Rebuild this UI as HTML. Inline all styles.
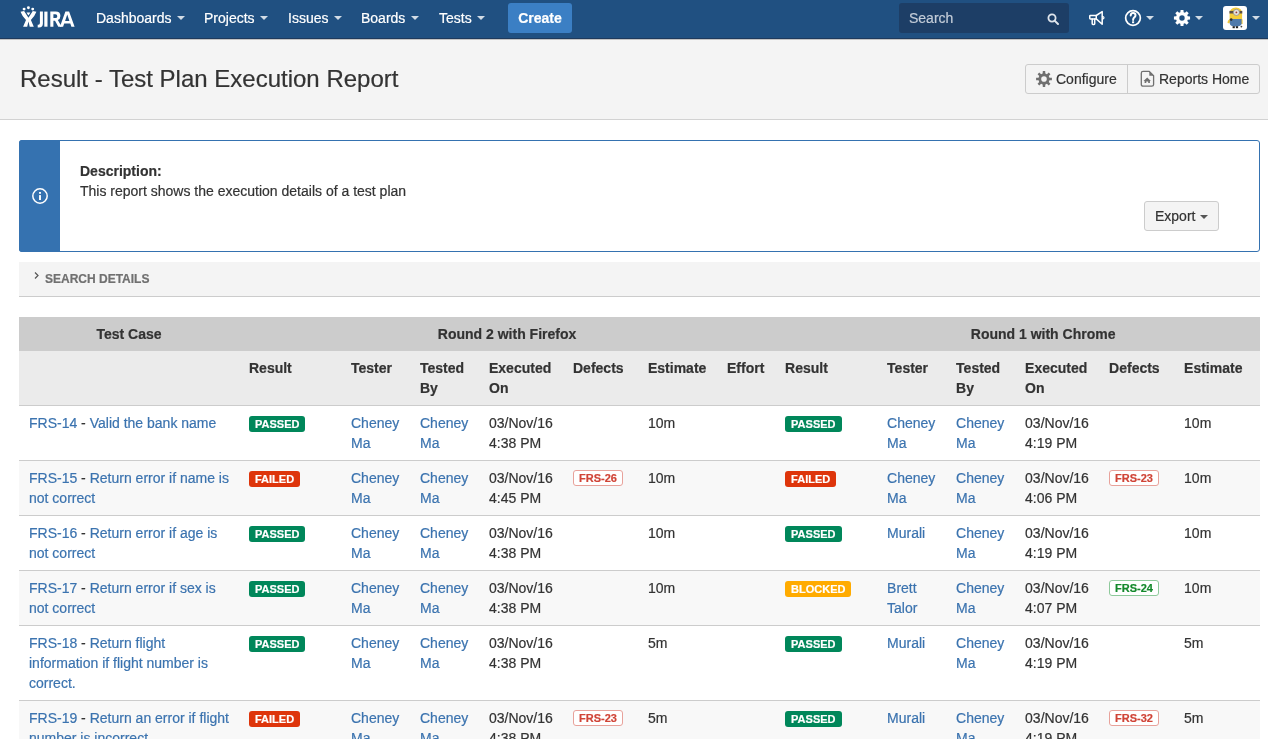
<!DOCTYPE html>
<html><head><meta charset="utf-8">
<style>
*{box-sizing:border-box;}
html,body{margin:0;padding:0;}
body{width:1268px;height:739px;overflow:hidden;position:relative;-webkit-font-smoothing:antialiased;background:#fff;font-family:"Liberation Sans",sans-serif;font-size:14px;color:#333;-webkit-text-stroke:0.2px currentColor;}
.abs{position:absolute;}
#hdr{will-change:transform;position:absolute;left:0;top:0;width:1268px;height:39px;background:#205081;border-bottom:1px solid #1f3a5c;box-shadow:0 1px 0 rgba(0,0,0,0.2);z-index:2;}
.nav{position:absolute;top:8px;height:20px;line-height:20px;color:#fff;font-size:14px;white-space:nowrap;}
.caret{position:absolute;width:0;height:0;border-left:4px solid transparent;border-right:4px solid transparent;border-top:4px solid rgba(255,255,255,.8);}
#create{position:absolute;left:508px;top:3px;width:64px;height:30px;background:#3b7fc4;border-radius:3px;color:#fff;font-weight:bold;text-align:center;line-height:30px;}
#search{position:absolute;left:899px;top:3px;width:170px;height:30px;background:#1d3e66;border-radius:3px;}
#search span{position:absolute;left:10px;top:5px;line-height:20px;color:#c3ccd8;}
#phead{will-change:transform;position:absolute;left:0;top:39px;width:1268px;height:81px;background:#f4f4f4;border-bottom:1px solid #d2d2d2;}
#title{position:absolute;left:20px;top:24px;font-size:24px;line-height:32px;color:#333;white-space:nowrap;}
#btns{position:absolute;left:1025px;top:25px;width:235px;height:30px;border:1px solid #ccc;border-radius:3px;background:#f4f4f4;}
#btns .div{position:absolute;left:101px;top:0;width:1px;height:28px;background:#ccc;}
#btns .t{position:absolute;top:4px;line-height:20px;color:#333;white-space:nowrap;}
#msg{will-change:transform;position:absolute;left:19px;top:140px;width:1241px;height:112px;border:1px solid #3572b0;border-radius:3px;background:#fff;}
#msg .strip{position:absolute;left:-1px;top:-1px;width:41px;height:112px;background:#3572b0;border-radius:3px 0 0 3px;}
#export{position:absolute;left:1124px;top:60px;width:75px;height:30px;border:1px solid #ccc;border-radius:3px;background:#f4f4f4;}
#sd{will-change:transform;position:absolute;left:19px;top:262px;width:1241px;height:35px;background:#f4f4f4;border-bottom:1px solid #ccc;}
#sd span{position:absolute;left:26px;top:10px;line-height:14px;font-size:12px;font-weight:bold;color:#707070;}
#tw{will-change:transform;position:absolute;left:19px;top:317px;width:1241px;height:430px;overflow:hidden;}
table{border-collapse:collapse;table-layout:fixed;width:1292px;}
td,th{padding:7px 10px;line-height:20px;vertical-align:top;text-align:left;font-size:14px;}
th{font-weight:bold;color:#333;}
tr.h1 th{background:#ccc;text-align:center;}
tr.h2 th{background:#ebebeb;border-bottom:1px solid #ccc;}
tbody tr td{border-bottom:1px solid #ccc;}
tbody tr.alt td{background:#f8f8f8;}
a{color:#3b73af;text-decoration:none;}
.loz{display:inline-block;height:16px;line-height:16px;padding:0 6px;border-radius:3px;font-size:11px;font-weight:bold;color:#fff;vertical-align:top;margin-top:3px;}
.pass{background:#00875a;}
.fail{background:#de350b;}
.block{background:#ffab00;}
.dr{display:inline-block;height:16px;line-height:14px;padding:0 5px;border-radius:3px;font-size:11px;font-weight:bold;border:1px solid #e8a29b;color:#d04437;background:#fff;vertical-align:top;margin-top:2px;}
.dg{display:inline-block;height:16px;line-height:14px;padding:0 5px;border-radius:3px;font-size:11px;font-weight:bold;border:1px solid #8ec99b;color:#14892c;background:#fff;vertical-align:top;margin-top:2px;}
</style></head><body>
<div id="hdr">
  <svg class="abs" style="left:0;top:0" width="80" height="38" viewBox="0 0 80 38">
    <g fill="#fff">
      <circle cx="24.1" cy="9.1" r="1.45"/><circle cx="28.4" cy="7.8" r="1.45"/><circle cx="32.7" cy="9.1" r="1.45"/>
      <polygon points="26.5,12.6 30.4,12.6 28.45,15.5"/>
      <path d="M20.5 11.8 L24.1 11.1 L28.45 17.7 L32.8 11.1 L36.4 11.8 Q34.5 16.8 30.9 20 L33.8 26.7 L29.7 26.7 L28.45 21.4 L27.2 26.7 L23.1 26.7 L26 20 Q22.4 16.8 20.5 11.8Z"/>
      <path d="M39.9 11.6 H42.9 V23.4 Q42.9 27.4 38.9 27.4 H37.7 V24.7 H38.5 Q39.9 24.7 39.9 23.1Z"/>
      <rect x="44.3" y="11.6" width="3.2" height="15.1"/>
      <path fill-rule="evenodd" d="M50.3 11.6 H55.6 Q60.4 11.6 60.4 15.9 Q60.4 19 57.8 20.1 L61.7 26.7 H58.3 L55 20.7 H53.4 V26.7 H50.3Z M53.4 14.3 V18.1 H55.3 Q57.3 18.1 57.3 16.2 Q57.3 14.3 55.3 14.3Z"/>
      <path fill-rule="evenodd" d="M65.4 11.6 H69.1 L74.6 26.7 H71.4 L70.3 23.5 H64.2 L63.1 26.7 H59.9Z M65.1 20.9 H69.4 L67.25 14.6Z"/>
    </g>
  </svg>
  <div class="nav" style="left:96px">Dashboards</div><div class="caret" style="left:177px;top:16px"></div>
  <div class="nav" style="left:204px">Projects</div><div class="caret" style="left:260px;top:16px"></div>
  <div class="nav" style="left:288px">Issues</div><div class="caret" style="left:334px;top:16px"></div>
  <div class="nav" style="left:361px">Boards</div><div class="caret" style="left:411px;top:16px"></div>
  <div class="nav" style="left:439px">Tests</div><div class="caret" style="left:477px;top:16px"></div>
  <div id="create">Create</div>
  <div id="search"><span>Search</span>
    <svg class="abs" style="left:148px;top:10px" width="13" height="13" viewBox="0 0 13 13"><circle cx="5" cy="5" r="3.6" stroke="#dfe5ec" stroke-width="1.8" fill="none"/><path d="M7.6 7.6 L11 11" stroke="#dfe5ec" stroke-width="2" stroke-linecap="round"/></svg>
  </div>
  <svg class="abs" style="left:1084px;top:6px" width="26" height="24" viewBox="0 0 26 24">
    <g stroke="#fff" stroke-width="1.5" fill="none" stroke-linejoin="round" stroke-linecap="round">
      <rect x="5.75" y="9.5" width="6.5" height="3.4" rx="0.6"/>
      <path d="M12.25 9.5 L18.2 5.6 L18.2 18.2 L12.25 12.9"/>
      <path d="M18.4 10.3 Q20 10.5 20 11.7 Q20 12.9 18.4 13.1" stroke-width="1.2"/>
      <path d="M8.2 12.9 L8.2 17.8 Q8.2 18.5 8.9 18.5 L10 18.5 Q10.7 18.5 10.7 17.8 L10.7 12.9"/>
    </g>
  </svg>
  <svg class="abs" style="left:1122px;top:6px" width="24" height="24" viewBox="0 0 24 24">
    <circle cx="11" cy="12" r="7.35" stroke="#fff" stroke-width="1.7" fill="none"/>
    <path d="M8.7 9.5 Q8.8 7.1 11.1 7.1 Q13.5 7.1 13.5 9.3 Q13.5 10.6 12.3 11.4 Q11.1 12.2 11.1 13.9" stroke="#fff" stroke-width="2" fill="none" stroke-linecap="round"/>
    <rect x="10.05" y="15.3" width="2.1" height="1.9" fill="#fff"/>
  </svg>
  <div class="caret" style="left:1146px;top:16px"></div>
  <svg class="abs" style="left:1173px;top:9px" width="18" height="18" viewBox="0 0 18 18">
    <path fill="#fff" fill-rule="evenodd" d="M7.37 3.23 L7.56 0.93 L10.44 0.93 L10.63 3.23 L11.93 3.77 L13.69 2.27 L15.73 4.31 L14.23 6.07 L14.77 7.37 L17.07 7.56 L17.07 10.44 L14.77 10.63 L14.23 11.93 L15.73 13.69 L13.69 15.73 L11.93 14.23 L10.63 14.77 L10.44 17.07 L7.56 17.07 L7.37 14.77 L6.07 14.23 L4.31 15.73 L2.27 13.69 L3.77 11.93 L3.23 10.63 L0.93 10.44 L0.93 7.56 L3.23 7.37 L3.77 6.07 L2.27 4.31 L4.31 2.27 L6.07 3.77Z M6.30 9.00 a2.70 2.70 0 1 0 5.40 0 a2.70 2.70 0 1 0 -5.40 0Z"/>
  </svg>
  <div class="caret" style="left:1195px;top:16px"></div>
  <div class="abs" style="left:1223px;top:6px;width:24px;height:24px;background:#fff;border-radius:3px;overflow:hidden">
    <svg width="24" height="24" viewBox="0 0 24 24">
      <path d="M6.6 8 Q6.6 1.5 12.85 1.5 Q19.1 1.5 19.1 8 L19.1 14 L6.6 14Z" fill="#f4cd3a"/>
      <path d="M4.3 16.5 Q5 13.5 7 13 L8.5 14.5 L6 17.5Z" fill="#f2c83a"/>
      <path d="M18 13 L19.6 13.5 L19.6 18 L18 18Z" fill="#f2c83a"/>
      <path d="M6.8 13 L18.6 13 L18.6 17.5 Q18.6 20.5 12.7 20.5 Q6.8 20.5 6.8 17.5Z" fill="#4f7aab"/>
      <rect x="6.4" y="4.9" width="12.9" height="2.6" fill="#5b5045"/>
      <circle cx="13.4" cy="6.4" r="3.1" fill="#e4e2de" stroke="#8a8580" stroke-width="0.7"/>
      <circle cx="13.4" cy="6.4" r="0.9" fill="#9c3a2e"/>
      <circle cx="8.2" cy="13.6" r="1.3" fill="#2e2e2e"/>
      <rect x="9.6" y="20.2" width="2.2" height="2" fill="#222"/><rect x="12.9" y="20.2" width="2.2" height="2" fill="#222"/>
      <circle cx="18.4" cy="20.6" r="0.9" fill="#444"/>
    </svg>
  </div>
  <div class="caret" style="left:1252px;top:16px"></div>
</div>

<div id="phead">
  <div id="title">Result - Test Plan Execution Report</div>
  <div id="btns">
    <svg class="abs" style="left:10px;top:6px" width="16" height="16" viewBox="0 0 16 16">
      <path fill="#707070" fill-rule="evenodd" d="M6.65 2.57 L6.81 0.09 L9.19 0.09 L9.35 2.57 L10.89 3.20 L12.75 1.56 L14.44 3.25 L12.80 5.11 L13.43 6.65 L15.91 6.81 L15.91 9.19 L13.43 9.35 L12.80 10.89 L14.44 12.75 L12.75 14.44 L10.89 12.80 L9.35 13.43 L9.19 15.91 L6.81 15.91 L6.65 13.43 L5.11 12.80 L3.25 14.44 L1.56 12.75 L3.20 10.89 L2.57 9.35 L0.09 9.19 L0.09 6.81 L2.57 6.65 L3.20 5.11 L1.56 3.25 L3.25 1.56 L5.11 3.20Z M5.20 8.00 a2.80 2.80 0 1 0 5.60 0 a2.80 2.80 0 1 0 -5.60 0Z"/>
    </svg>
    <span class="t" style="left:30px">Configure</span>
    <div class="div"></div>
    <svg class="abs" style="left:114px;top:5px" width="16" height="18" viewBox="0 0 16 18">
      <path d="M1.3 3.2 Q1.3 1.4 3.1 1.4 H9.3 L13.6 5.7 V14.4 Q13.6 16.2 11.8 16.2 H3.1 Q1.3 16.2 1.3 14.4Z" stroke="#707070" stroke-width="1.3" fill="none" stroke-linejoin="round"/>
      <path d="M9.3 1.4 V5.7 H13.6Z" fill="#707070"/>
      <path d="M7.2 7.6 L10.9 11 H9.9 V13 H8.2 V11.6 H6.3 V13 H4.6 V11 H3.5Z" fill="#707070"/>
    </svg>
    <span class="t" style="left:133px">Reports Home</span>
  </div>
</div>

<div id="msg">
  <div class="strip">
    <svg class="abs" style="left:12px;top:47px" width="18" height="18" viewBox="0 0 18 18">
      <circle cx="9" cy="9" r="7.2" stroke="#fff" stroke-width="1.5" fill="none"/>
      <rect x="8.05" y="5.0" width="1.9" height="1.8" fill="#fff"/>
      <rect x="8.05" y="8.1" width="1.9" height="4.9" fill="#fff"/>
    </svg>
  </div>
  <div class="abs" style="left:60px;top:20px;line-height:20px"><b>Description:</b><br>This report shows the execution details of a test plan</div>
  <div id="export"><span class="abs" style="left:10px;top:4px;line-height:20px">Export</span><div class="caret" style="left:55px;top:13px;border-top-color:#555"></div></div>
</div>

<div id="sd">
  <svg class="abs" style="left:14px;top:9px" width="8" height="9" viewBox="0 0 8 9"><path d="M2 1.5 L5 4.5 L2 7.5" stroke="#555" stroke-width="1.2" fill="none"/></svg>
  <span>SEARCH DETAILS</span>
</div>

<div id="tw">
<table>
<colgroup>
<col style="width:220px"><col style="width:102px"><col style="width:69px"><col style="width:69px"><col style="width:84px"><col style="width:75px"><col style="width:79px"><col style="width:58px">
<col style="width:102px"><col style="width:69px"><col style="width:69px"><col style="width:84px"><col style="width:75px"><col style="width:79px"><col style="width:58px">
</colgroup>
<thead>
<tr class="h1"><th>Test Case</th><th colspan="7">Round 2 with Firefox</th><th colspan="7">Round 1 with Chrome</th></tr>
<tr class="h2"><th></th><th>Result</th><th>Tester</th><th>Tested By</th><th>Executed On</th><th>Defects</th><th>Estimate</th><th>Effort</th><th>Result</th><th>Tester</th><th>Tested By</th><th>Executed On</th><th>Defects</th><th>Estimate</th><th>Effort</th></tr>
</thead>
<tbody>
<tr><td><a>FRS-14</a> - <a>Valid the bank name</a></td><td><span class="loz pass">PASSED</span></td><td><a>Cheney Ma</a></td><td><a>Cheney Ma</a></td><td>03/Nov/16 4:38 PM</td><td></td><td>10m</td><td></td><td><span class="loz pass">PASSED</span></td><td><a>Cheney Ma</a></td><td><a>Cheney Ma</a></td><td>03/Nov/16 4:19 PM</td><td></td><td>10m</td><td></td></tr>
<tr class="alt"><td><a>FRS-15</a> - <a>Return error if name is not correct</a></td><td><span class="loz fail">FAILED</span></td><td><a>Cheney Ma</a></td><td><a>Cheney Ma</a></td><td>03/Nov/16 4:45 PM</td><td><span class="dr">FRS-26</span></td><td>10m</td><td></td><td><span class="loz fail">FAILED</span></td><td><a>Cheney Ma</a></td><td><a>Cheney Ma</a></td><td>03/Nov/16 4:06 PM</td><td><span class="dr">FRS-23</span></td><td>10m</td><td></td></tr>
<tr><td><a>FRS-16</a> - <a>Return error if age is not correct</a></td><td><span class="loz pass">PASSED</span></td><td><a>Cheney Ma</a></td><td><a>Cheney Ma</a></td><td>03/Nov/16 4:38 PM</td><td></td><td>10m</td><td></td><td><span class="loz pass">PASSED</span></td><td><a>Murali</a></td><td><a>Cheney Ma</a></td><td>03/Nov/16 4:19 PM</td><td></td><td>10m</td><td></td></tr>
<tr class="alt"><td><a>FRS-17</a> - <a>Return error if sex is not correct</a></td><td><span class="loz pass">PASSED</span></td><td><a>Cheney Ma</a></td><td><a>Cheney Ma</a></td><td>03/Nov/16 4:38 PM</td><td></td><td>10m</td><td></td><td><span class="loz block">BLOCKED</span></td><td><a>Brett Talor</a></td><td><a>Cheney Ma</a></td><td>03/Nov/16 4:07 PM</td><td><span class="dg">FRS-24</span></td><td>10m</td><td></td></tr>
<tr><td><a>FRS-18</a> - <a>Return flight information if flight number is correct.</a></td><td><span class="loz pass">PASSED</span></td><td><a>Cheney Ma</a></td><td><a>Cheney Ma</a></td><td>03/Nov/16 4:38 PM</td><td></td><td>5m</td><td></td><td><span class="loz pass">PASSED</span></td><td><a>Murali</a></td><td><a>Cheney Ma</a></td><td>03/Nov/16 4:19 PM</td><td></td><td>5m</td><td></td></tr>
<tr class="alt"><td><a>FRS-19</a> - <a>Return an error if flight number is incorrect.</a></td><td><span class="loz fail">FAILED</span></td><td><a>Cheney Ma</a></td><td><a>Cheney Ma</a></td><td>03/Nov/16 4:38 PM</td><td><span class="dr">FRS-23</span></td><td>5m</td><td></td><td><span class="loz pass">PASSED</span></td><td><a>Murali</a></td><td><a>Cheney Ma</a></td><td>03/Nov/16 4:19 PM</td><td><span class="dr">FRS-32</span></td><td>5m</td><td></td></tr>
</tbody>
</table>
</div>
</body></html>
